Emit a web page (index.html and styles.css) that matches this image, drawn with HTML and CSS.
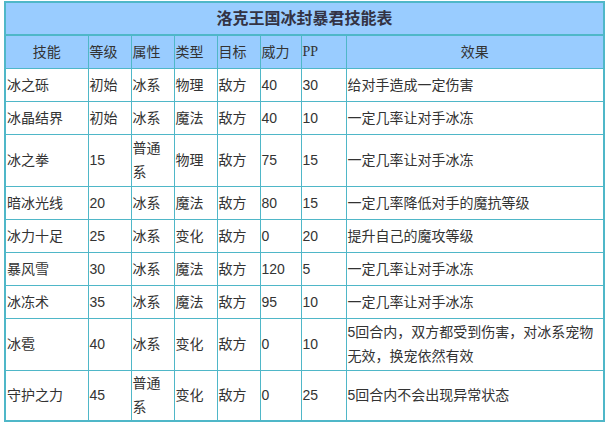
FILE: index.html
```html
<!DOCTYPE html>
<html lang="zh">
<head>
<meta charset="utf-8">
<link rel="stylesheet" href="styles.css">
</head>
<body>
<div class="page">
  <table class="skills">
    <colgroup>
      <col class="c1"><col class="c2"><col class="c3"><col class="c4"><col class="c5"><col class="c6"><col class="c7"><col class="c8">
    </colgroup>
    <tr class="title"><th colspan="8">洛克王国冰封暴君技能表</th></tr>
    <tr class="head">
      <th class="ctr">技能</th><th>等级</th><th>属性</th><th>类型</th><th>目标</th><th>威力</th><th class="pp">PP</th><th class="ctr">效果</th>
    </tr>
    <tr><td>冰之砾</td><td>初始</td><td>冰系</td><td>物理</td><td>敌方</td><td>40</td><td>30</td><td>给对手造成一定伤害</td></tr>
    <tr><td>冰晶结界</td><td>初始</td><td>冰系</td><td>魔法</td><td>敌方</td><td>40</td><td>10</td><td>一定几率让对手冰冻</td></tr>
    <tr class="tall"><td>冰之拳</td><td>15</td><td>普通系</td><td>物理</td><td>敌方</td><td>75</td><td>15</td><td>一定几率让对手冰冻</td></tr>
    <tr><td>暗冰光线</td><td>20</td><td>冰系</td><td>魔法</td><td>敌方</td><td>80</td><td>15</td><td>一定几率降低对手的魔抗等级</td></tr>
    <tr><td>冰力十足</td><td>25</td><td>冰系</td><td>变化</td><td>敌方</td><td>0</td><td>20</td><td>提升自己的魔攻等级</td></tr>
    <tr><td>暴风雪</td><td>30</td><td>冰系</td><td>魔法</td><td>敌方</td><td>120</td><td>5</td><td>一定几率让对手冰冻</td></tr>
    <tr><td>冰冻术</td><td>35</td><td>冰系</td><td>魔法</td><td>敌方</td><td>95</td><td>10</td><td>一定几率让对手冰冻</td></tr>
    <tr class="tall"><td>冰雹</td><td>40</td><td>冰系</td><td>变化</td><td>敌方</td><td>0</td><td>10</td><td>5回合内，双方都受到伤害，对冰系宠物无效，换宠依然有效</td></tr>
    <tr class="tall last"><td>守护之力</td><td>45</td><td>普通系</td><td>变化</td><td>敌方</td><td>0</td><td>25</td><td>5回合内不会出现异常状态</td></tr>
  </table>
</div>
</body>
</html>
```

FILE: styles.css
```css
html, body {
  margin: 0;
  padding: 0;
  background: #ffffff;
}
.page {
  padding: 1px 0 0 4px;
}
.skills {
  border-collapse: collapse;
  table-layout: fixed;
  width: 599px;
  font-family: "Liberation Sans", "Noto Sans CJK SC", sans-serif;
  font-size: 14px;
  color: #333333;
  border: 2px solid #4fb7c8;
}
.c1 { width: 83px; }
.c2 { width: 43px; }
.c3 { width: 43px; }
.c4 { width: 43px; }
.c5 { width: 43px; }
.c6 { width: 41px; }
.c7 { width: 45px; }
.c8 { width: 258px; }
.skills th,
.skills td {
  border: 1px solid #4fb7c8;
  padding: 0 1px;
  height: 33px;
  line-height: 24px;
  text-align: left;
  vertical-align: middle;
  font-weight: normal;
  box-sizing: border-box;
}
.skills .title th {
  background: #99ccff;
  text-align: center;
  font-weight: bold;
  font-size: 16px;
  color: #333344;
  border-bottom: 2px solid #4fb7c8;
}
.skills .head th {
  background: #99ccff;
}
.skills .head .ctr {
  text-align: center;
}
.skills .head .pp {
  font-family: "Liberation Serif", serif;
}
.skills .tall td {
  height: 52px;
}
.skills .last td {
  height: 51px;
}
```
